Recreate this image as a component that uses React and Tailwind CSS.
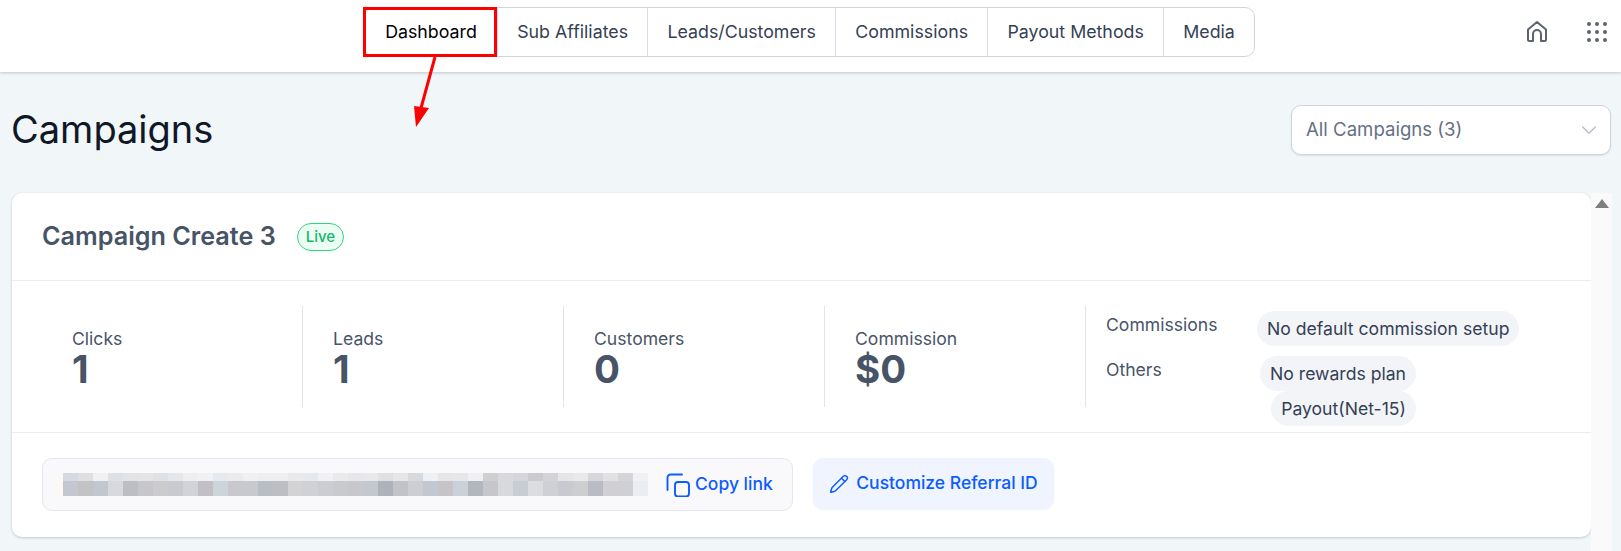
import React from 'react';
import { ChevronDown, Pencil } from 'lucide-react';

const tabs = ['Dashboard', 'Sub Affiliates', 'Leads/Customers', 'Commissions', 'Payout Methods', 'Media'];
const stats = [
  { label: 'Clicks', value: '1' },
  { label: 'Leads', value: '1' },
  { label: 'Customers', value: '0' },
  { label: 'Commission', value: '$0' },
];

const topRow = ['#d6d9e1', '#dfdfe2', '#f1f1f3', '#dfe0e4', '#e2e3e6', '#e4e4e6', '#e0e1e4', '#e6e7ea', '#eeeef0', '#f0f1f4', '#e8e9ec', '#ebebed', '#f0f0f2', '#eeeef0', '#eeeef0', '#e9e9ec', '#e7e8ec', '#f0f1f4', '#eaeaec', '#e6e7ea', '#e8e8ea', '#dfe0e3', '#e6e6e8', '#d8d9dd', '#eff0f4', '#e6e5e8', '#e7e7e9', '#eef0f3', '#cfcfd2', '#d9d9dd', '#d6d6da', '#cacbd0', '#d4d4d8', '#e5e5e8', '#e9e9eb', '#d6d6db', '#e1e1e4', '#d5d5d9', '#f0f1f5'];
const bottomRow = ['#c3c7d0', '#c3c3c5', '#c1c6cf', '#d8d9de', '#bdbec3', '#c7c6cb', '#cccccf', '#c9cacf', '#d2d3d8', '#c2c0c4', '#cdd4dc', '#c8c9cf', '#c8c9cf', '#b9bdc5', '#bcbec4', '#d3d3d6', '#d0d1d6', '#cccdd3', '#c9cace', '#c7c7cc', '#c2c7d0', '#aeb2ba', '#c2c3c8', '#cdced2', '#c3c7d0', '#c7c4c8', '#ccd0d9', '#b2b6bf', '#c7c6ca', '#d8d9dd', '#c8ccd5', '#dcdde1', '#cfd0d4', '#c8c9d1', '#cdced2', '#b9bcc5', '#d0cfd3', '#cfd0d3', '#ecedf2'];

function Mosaic() {
  return (
    <svg width="592" height="23" className="shrink-0">
      <rect x="0" y="0" width="7" height="23" fill="#fbf8f5" />
      {topRow.map((c, i) => (
        <rect key={i} x={7 + i * 15} y="0" width="15" height="8" fill={c} />
      ))}
      {bottomRow.map((c, i) => (
        <rect key={i} x={7 + i * 15} y="8" width="15" height="15" fill={c} />
      ))}
    </svg>
  );
}

function CopyIcon() {
  return (
    <svg width="24" height="24" viewBox="0 0 24 24" fill="none" stroke="currentColor" strokeWidth="1.9" strokeLinecap="round" className="shrink-0">
      <rect x="9" y="9" width="14" height="14.5" rx="3" />
      <path d="M1.5 17V4.5a3 3 0 0 1 3-3H16" />
    </svg>
  );
}

export default function App() {
  return (
    <div className="relative h-[551px] w-[1621px] overflow-hidden bg-[#f1f6f9] font-['Inter',sans-serif]">
      <header className="relative flex h-[72px] items-start bg-white pt-[7px] shadow-[0_1px_3px_rgba(0,0,0,0.2)]">
        <nav className="ml-[364px] flex h-[50px] rounded-[10px] border border-[#d0d5dd] bg-white">
          {tabs.map((t, i) => (
            <div
              key={t}
              className={`flex items-center justify-center text-[17.8px] ${i === 0 ? 'w-[132px] text-black' : 'border-l border-[#d8dce5] px-[19.2px] text-[#344054]'}`}
            >
              {t}
            </div>
          ))}
        </nav>
        <div className="ml-auto mr-[14px] mt-[13px] flex items-center gap-[39px]">
          <svg width="22" height="23" viewBox="0 0 22 23" fill="none" stroke="#5d6470" strokeWidth="2" strokeLinejoin="round">
            <path d="M2 19.5V9.5L11 2l9 7.5v10a1.500 1.500 0 0 1-1.500 1.500H15v-7a4 4 0 0 0-8 0v7H3.500A1.500 1.500 0 0 1 2 19.500z" />
          </svg>
          <div className="grid grid-cols-3 gap-[4px]">
            {Array.from({ length: 9 }).map((_, i) => (
              <span key={i} className="h-[4px] w-[4px] rounded-full bg-[#5d6470]" />
            ))}
          </div>
        </div>
      </header>

      <div className="flex items-center justify-between pl-[11px] pr-[10px] pt-[33px]">
        <h1 className="pb-[3px] text-[38px] font-normal leading-[44px] text-[#101828]">Campaigns</h1>
        <div className="flex h-[50px] w-[320px] items-center justify-between rounded-[10px] border border-[#d0d5dd] bg-white pl-[14px] pr-[8px] text-[18.6px] text-[#667085] shadow-[0_1px_2px_rgba(16,24,40,0.1)]">
          <span>All Campaigns (3)</span>
          <ChevronDown size={26} strokeWidth={1} className="text-[#b0b7c3]" />
        </div>
      </div>

      <div className="mt-[38px] flex items-start pl-[12px]">
        <section className="w-[1579px] rounded-[10px] bg-white shadow-[0_1px_3px_rgba(16,24,40,0.2)]">
          <div className="flex h-[88px] items-center gap-[21px] border-b border-[#eaecf0] pl-[30px]">
            <h2 className="text-[25.2px] font-semibold text-[#475467]">Campaign Create 3</h2>
            <span className="rounded-full border border-[#32d583] bg-[#ecfdf3] px-[8px] py-[3px] text-[15px] font-medium leading-[20px] text-[#12b76a]">Live</span>
          </div>

          <div className="flex h-[152px] items-start border-b border-[#eaecf0] pt-[25px]">
            {stats.map((s) => (
              <div key={s.label} className="flex h-[101px] w-[261px] flex-col border-r border-[#e0e3e8] pl-[60px] pt-[21px] first:w-[291px] [&:not(:first-child)]:pl-[30px]">
                <span className="text-[17.6px] leading-[23px] text-[#475467]">{s.label}</span>
                <span className="text-[38.5px] font-bold leading-[38px] text-[#475467]">{s.value}</span>
              </div>
            ))}
            <div className="grid grid-cols-[151px_auto] gap-y-[10px] pl-[20px] pt-[5px]">
              <span className="pt-[2px] text-[17.6px] leading-[24px] text-[#475467]">Commissions</span>
              <div className="flex">
                <span className="rounded-full bg-[#f2f4f7] px-[10px] py-[6px] text-[17.6px] leading-[23px] text-[#344054]">No default commission setup</span>
              </div>
              <span className="pt-[2px] text-[17.6px] leading-[24px] text-[#475467]">Others</span>
              <div className="flex w-[159px] flex-col items-end">
                <span className="rounded-full bg-[#f2f4f7] px-[10px] py-[6px] text-[17.6px] leading-[23px] text-[#344054]">No rewards plan</span>
                <span className="rounded-full bg-[#f2f4f7] px-[10px] py-[6px] text-[17.6px] leading-[23px] text-[#344054]">Payout(Net-15)</span>
              </div>
            </div>
          </div>

          <div className="flex h-[104px] items-start gap-[20px] pl-[30px] pt-[25px]">
            <div className="flex h-[53px] w-[751px] items-center rounded-[10px] border border-[#e4e7ec] bg-[#f9f9fb] pl-[13px]">
              <Mosaic />
              <div className="ml-[18px] flex items-center gap-[5px] text-[17.5px] font-medium text-[#0b5cff]">
                <CopyIcon />
                <span>Copy link</span>
              </div>
            </div>
            <div className="flex h-[51px] w-[241px] items-center justify-center gap-[7px] rounded-[10px] bg-[#eff4ff] text-[17.5px] font-medium text-[#0b5cff] shadow-[0_1px_2px_rgba(16,24,40,0.05)]">
              <Pencil size={20} strokeWidth={1.75} />
              <span>Customize Referral ID</span>
            </div>
          </div>
        </section>
        <div className="flex h-[358px] w-[21px] justify-center bg-[#fafafa] pt-[6px]">
          <span className="h-0 w-0 border-x-[7px] border-b-[9px] border-x-transparent border-b-[#7f7f7f]" />
        </div>
      </div>

      <div className="absolute left-[363px] top-[7px] h-[50px] w-[134px] border-[3px] border-[#fe0000]" />
      <svg className="absolute left-[405px] top-[50px]" width="40" height="80" viewBox="0 0 40 80">
        <line x1="30" y1="7" x2="16" y2="58" stroke="#fe0000" strokeWidth="3" />
        <polygon points="11,77 9,56 24,58" fill="#fe0000" />
      </svg>
    </div>
  );
}
